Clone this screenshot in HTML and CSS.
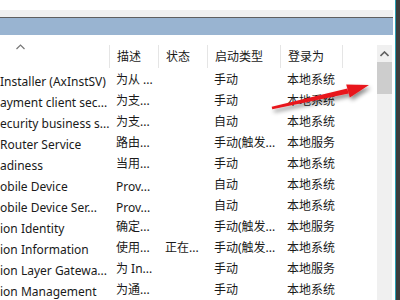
FILE: index.html
```html
<!DOCTYPE html>
<html lang="zh-CN">

<head>
    <meta charset="UTF-8">
    <meta name="viewport" content="width=device-width, initial-scale=1.0">
    <title>服务</title>
    <link rel="stylesheet" href="styles.css">
</head>

<body>
    <div class="window">
        <div class="top"></div>
        <div class="strip"></div>
        <div class="band"></div>

        <div class="area">
            <div class="list">
                <div class="head">
                    <div class="cell c1">
                        <svg class="sort" width="9" height="6" viewBox="0 0 9 6">
                            <path d="M0.5 5 L4.5 1 L8.5 5" fill="none" stroke="#777" stroke-width="1.2"/>
                        </svg>
                    </div>
                    <div class="cell c2 sep">描述</div>
                    <div class="cell c3 sep">状态</div>
                    <div class="cell c4 sep">启动类型</div>
                    <div class="cell c5 sep last">登录为</div>
                </div>

                <div class="row"><div class="cell c1">Installer (AxInstSV)</div><div class="cell c2">为从 ...</div><div class="cell c3"></div><div class="cell c4">手动</div><div class="cell c5">本地系统</div></div>
                <div class="row"><div class="cell c1">ayment client sec...</div><div class="cell c2">为支...</div><div class="cell c3"></div><div class="cell c4">手动</div><div class="cell c5">本地系统</div></div>
                <div class="row"><div class="cell c1">ecurity business s...</div><div class="cell c2">为支...</div><div class="cell c3"></div><div class="cell c4">自动</div><div class="cell c5">本地系统</div></div>
                <div class="row"><div class="cell c1">Router Service</div><div class="cell c2">路由...</div><div class="cell c3"></div><div class="cell c4">手动(触发...</div><div class="cell c5">本地服务</div></div>
                <div class="row"><div class="cell c1">adiness</div><div class="cell c2">当用...</div><div class="cell c3"></div><div class="cell c4">手动</div><div class="cell c5">本地系统</div></div>
                <div class="row"><div class="cell c1">obile Device</div><div class="cell c2 lat">Prov...</div><div class="cell c3"></div><div class="cell c4">自动</div><div class="cell c5">本地系统</div></div>
                <div class="row"><div class="cell c1">obile Device Ser...</div><div class="cell c2 lat">Prov...</div><div class="cell c3"></div><div class="cell c4">自动</div><div class="cell c5">本地系统</div></div>
                <div class="row"><div class="cell c1">ion Identity</div><div class="cell c2">确定...</div><div class="cell c3"></div><div class="cell c4">手动(触发...</div><div class="cell c5">本地服务</div></div>
                <div class="row"><div class="cell c1">ion Information</div><div class="cell c2">使用...</div><div class="cell c3">正在...</div><div class="cell c4">手动(触发...</div><div class="cell c5">本地系统</div></div>
                <div class="row"><div class="cell c1">ion Layer Gatewa...</div><div class="cell c2">为 In...</div><div class="cell c3"></div><div class="cell c4">手动</div><div class="cell c5">本地服务</div></div>
                <div class="row"><div class="cell c1">ion Management</div><div class="cell c2">为通...</div><div class="cell c3"></div><div class="cell c4">手动</div><div class="cell c5">本地系统</div></div>
            </div>

            <div class="scroll">
                <div class="up">
                    <svg width="9" height="6" viewBox="0 0 9 6">
                        <path d="M0.5 5 L4.5 1 L8.5 5" fill="none" stroke="#606060" stroke-width="1.6"/>
                    </svg>
                </div>
                <div class="thumb"></div>
            </div>
        </div>
    </div>
    <div class="edge"></div>
    <div class="frame"></div>

    <!-- red arrow drawn over the list -->
    <svg class="arrow" width="400" height="300" viewBox="0 0 400 300">
        <defs>
            <filter id="shade" x="-10%" y="-50%" width="130%" height="250%">
                <feDropShadow dx="2" dy="3" stdDeviation="2" flood-color="#000" flood-opacity="0.45"/>
            </filter>
        </defs>
        <g fill="#e8161b" filter="url(#shade)">
            <polygon points="272.3,109.2 271.7,106.8 347.3,88.6 348.7,93.4"/>
            <polygon points="369,85 346.2,84.6 349.8,97.4"/>
        </g>
    </svg>
</body>

</html>
```

FILE: styles.css
```css
body {
    margin: 0;
    width: 400px;
    height: 300px;
    overflow: hidden;
    display: flex;
    background: #fff;
    font-family: "Segoe UI", "Noto Sans", "Noto Sans CJK SC", sans-serif;
    font-size: 12px;
    color: #1a1a1a;
}

.window {
    width: 395px;
    display: flex;
    flex-direction: column;
}

.top {
    height: 11px;
}

.strip {
    height: 7px;
    margin-right: 2px;
    background: #f0f0f0;
    border-bottom: 1px solid #5f5f5f;
}

.band {
    height: 18px;
    margin-right: 2px;
    background: #99b4d1;
}

.area {
    flex: 1;
    display: flex;
    padding-right: 3px;
}

.list {
    flex: 1;
}

.head {
    height: 34px;
    display: flex;
    align-items: flex-end;
}

.head .cell {
    height: 23px;
    line-height: 23px;
    margin-bottom: 1px;
}

.head .c1 {
    height: 34px;
    margin-bottom: 0;
    line-height: normal;
    padding-left: 16px;
    padding-top: 9px;
}

.sort {
    display: block;
}

.sep {
    border-left: 1px solid #e5e5e5;
}

.last {
    border-right: 1px solid #e5e5e5;
}

.row {
    height: 21px;
    line-height: 21px;
    display: flex;
}

.cell {
    white-space: nowrap;
    box-sizing: border-box;
    padding-left: 7px;
}

/* latin text sits a little lower than the CJK text */
.row .c1,
.row .lat {
    padding-top: 2px;
}

.c1 {
    width: 109px;
    padding-left: 0;
}

.c2 {
    width: 49px;
}

.c3 {
    width: 49px;
}

.c4 {
    width: 73px;
}

.c5 {
    width: 63px;
}

.scroll {
    width: 15px;
    margin-top: 10px;
    background: #f0f0f0;
    display: flex;
    flex-direction: column;
}

.up {
    height: 17px;
    display: flex;
    align-items: center;
    justify-content: center;
}

.thumb {
    height: 32px;
    background: #cdcdcd;
}

.edge {
    width: 1px;
    background: #2a9fb3;
}

.frame {
    flex: 1;
    background: #3c3c3c;
}

.arrow {
    position: absolute;
    left: 0;
    top: 0;
    pointer-events: none;
}
```
